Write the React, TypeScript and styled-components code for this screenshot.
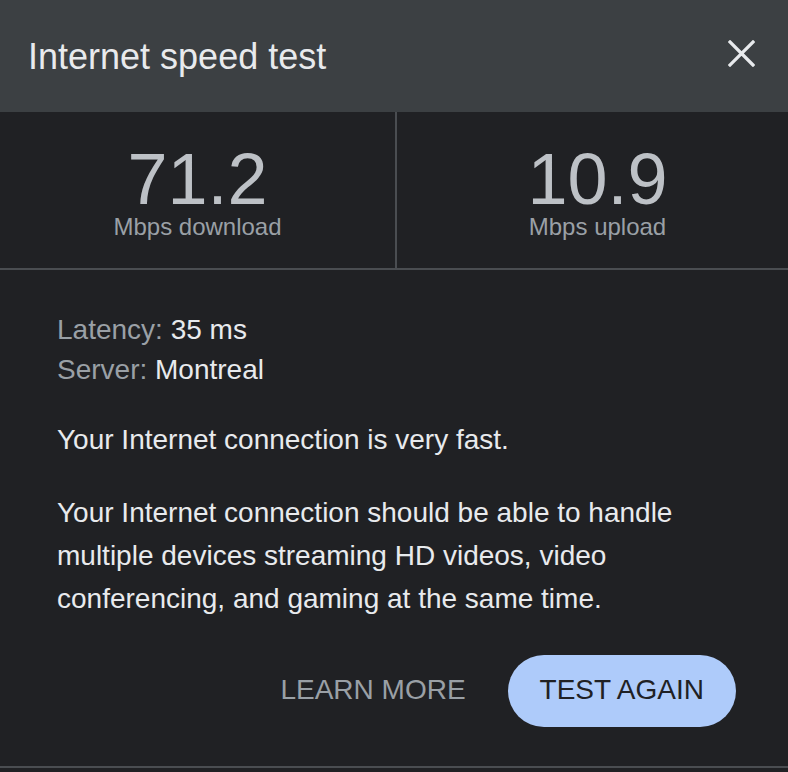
import React from "react";
import styled, { createGlobalStyle } from "styled-components";

const GlobalStyle = createGlobalStyle`
  html, body {
    margin: 0;
    padding: 0;
    background: #202124;
  }
  body {
    font-family: "Liberation Sans", Arial, Helvetica, sans-serif;
  }
`;

const Panel = styled.div`
  width: 788px;
  height: 772px;
  background: #202124;
  display: flex;
  flex-direction: column;
  box-sizing: border-box;
`;

const Header = styled.div`
  height: 112px;
  background: #3c4043;
  display: flex;
  align-items: center;
  justify-content: space-between;
  padding: 1px 33px 0 28px;
  box-sizing: border-box;
`;

const Title = styled.h1`
  margin: 0;
  font-size: 36px;
  font-weight: 400;
  color: #e8eaed;
  line-height: 40px;
`;

const CloseButton = styled.button`
  border: none;
  background: none;
  padding: 0;
  margin-top: -7px;
  width: 27px;
  height: 27px;
  display: flex;
  cursor: pointer;
`;

const Stats = styled.div`
  display: grid;
  grid-template-columns: 395px 2px 1fr;
  height: 158px;
  border-bottom: 2px solid #4a4d51;
  box-sizing: border-box;
`;

const Divider = styled.div`
  background: #4a4d51;
`;

const Stat = styled.div<{ $shift?: number }>`
  display: flex;
  flex-direction: column;
  align-items: center;
  padding-top: 37px;
  padding-left: ${(p) => p.$shift ?? 0}px;
`;

const StatValue = styled.div`
  font-size: 72px;
  line-height: 60px;
  margin-bottom: 4px;
  color: #bdc1c6;
`;

const StatLabel = styled.div`
  font-size: 24px;
  line-height: 28px;
  color: #9aa0a6;
`;

const Details = styled.div`
  flex: 1;
  display: flex;
  flex-direction: column;
  padding: 40px 52px 0 57px;
  border-bottom: 2px solid #4a4d51;
  margin-bottom: 4px;
`;

const InfoLine = styled.div`
  font-size: 28px;
  line-height: 40px;
  color: #e8eaed;
`;

const InfoKey = styled.span`
  color: #9aa0a6;
`;

const Verdict = styled.p`
  margin: 30px 0 0;
  font-size: 28px;
  line-height: 40px;
  color: #e8eaed;
`;

const Description = styled.p`
  margin: 31px 0 0;
  font-size: 28px;
  line-height: 43px;
  color: #e8eaed;
  max-width: 640px;
`;

const Actions = styled.div`
  display: flex;
  justify-content: flex-end;
  align-items: center;
  gap: 10px;
  margin-top: 35px;
`;

const ActionButton = styled.button<{ $primary?: boolean }>`
  border: none;
  height: 72px;
  padding: 0 32px 2px;
  border-radius: 36px;
  font-family: "Liberation Sans", Arial, sans-serif;
  font-size: 28px;
  text-transform: uppercase;
  cursor: pointer;
  background: ${(p) => (p.$primary ? "#aecbfa" : "transparent")};
  color: ${(p) => (p.$primary ? "#202124" : "#9aa0a6")};
`;

export default function App() {
  return (
    <>
      <GlobalStyle />
      <Panel>
        <Header>
          <Title>Internet speed test</Title>
          <CloseButton aria-label="Close">
            <svg width="27" height="27" viewBox="0 0 27 27">
              <path
                d="M2 2 L25 25 M25 2 L2 25"
                stroke="#e8eaed"
                strokeWidth="3.2"
                strokeLinecap="square"
                fill="none"
              />
            </svg>
          </CloseButton>
        </Header>
        <Stats>
          <Stat>
            <StatValue>71.2</StatValue>
            <StatLabel>Mbps download</StatLabel>
          </Stat>
          <Divider />
          <Stat $shift={10}>
            <StatValue>10.9</StatValue>
            <StatLabel>Mbps upload</StatLabel>
          </Stat>
        </Stats>
        <Details>
          <InfoLine>
            <InfoKey>Latency:</InfoKey> 35 ms
          </InfoLine>
          <InfoLine>
            <InfoKey>Server:</InfoKey> Montreal
          </InfoLine>
          <Verdict>Your Internet connection is very fast.</Verdict>
          <Description>
            Your Internet connection should be able to handle multiple devices
            streaming HD videos, video conferencing, and gaming at the same time.
          </Description>
          <Actions>
            <ActionButton>Learn more</ActionButton>
            <ActionButton $primary>Test again</ActionButton>
          </Actions>
        </Details>
      </Panel>
    </>
  );
}
